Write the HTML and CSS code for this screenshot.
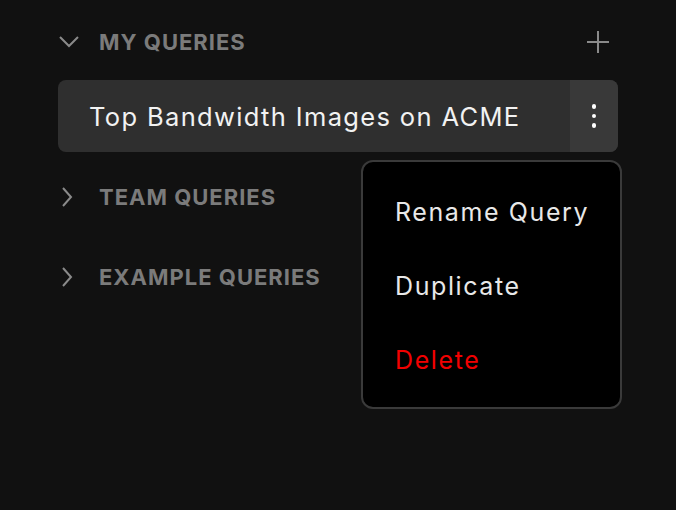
FILE: index.html
```html
<!DOCTYPE html>
<html>
<head>
<meta charset="utf-8">
<link rel="stylesheet" href="styles.css">
</head>
<body>
<div class="sidebar">
  <div class="section-header">
    <svg class="chev-down" width="20" height="12" viewBox="0 0 20 12"><path d="M1 1 L10 10 L19 1" fill="none" stroke="#8a8a8a" stroke-width="2"/></svg>
    <span class="section-title">MY QUERIES</span>
    <svg class="plus" width="22" height="22" viewBox="0 0 22 22"><path d="M11 0 V22 M0 11 H22" stroke="#8a8a8a" stroke-width="2"/></svg>
  </div>
  <div class="query-row">
    <span class="query-name">Top Bandwidth Images on ACME</span>
    <div class="kebab">
      <span class="dot"></span><span class="dot"></span><span class="dot"></span>
    </div>
    <div class="menu">
      <div class="menu-item">Rename Query</div>
      <div class="menu-item">Duplicate</div>
      <div class="menu-item danger">Delete</div>
    </div>
  </div>
  <div class="section-header collapsed first">
    <svg class="chev-right" width="12" height="20" viewBox="0 0 12 20"><path d="M1 1 L9 10 L1 19" fill="none" stroke="#8a8a8a" stroke-width="2"/></svg>
    <span class="section-title">TEAM QUERIES</span>
  </div>
  <div class="section-header collapsed">
    <svg class="chev-right" width="12" height="20" viewBox="0 0 12 20"><path d="M1 1 L9 10 L1 19" fill="none" stroke="#8a8a8a" stroke-width="2"/></svg>
    <span class="section-title">EXAMPLE QUERIES</span>
  </div>
</div>
</body>
</html>
```

FILE: styles.css
```css
html, body {
  margin: 0;
  padding: 0;
  background: #111111;
  font-family: Inter, "Noto Sans", sans-serif;
  height: 100%;
}

.sidebar {
  width: 560px;
  padding: 22px 0 0 58px;
  display: flex;
  flex-direction: column;
}

.section-header {
  height: 40px;
  display: flex;
  align-items: center;
}

.section-header.first {
  margin-top: 25px;
}

.section-header.collapsed + .section-header.collapsed {
  margin-top: 40px;
}

.chev-down {
  margin-left: 1px;
  margin-right: 20px;
}

.chev-right {
  margin-left: 4px;
  margin-right: 25px;
}

.section-title {
  color: #7b7b7b;
  font-weight: 700;
  font-size: 22px;
  letter-spacing: 1px;
}

.plus {
  margin-left: auto;
  margin-right: 9px;
}

.query-row {
  position: relative;
  margin-top: 18px;
  height: 72px;
  background: #2f2f2f;
  border-radius: 8px;
  display: flex;
  align-items: center;
}

.query-name {
  padding-left: 31px;
  color: #f2f2f2;
  font-size: 25.5px;
  letter-spacing: 1.35px;
  flex: 1;
}

.kebab {
  width: 48px;
  align-self: stretch;
  background: #393939;
  border-radius: 0 8px 8px 0;
  display: flex;
  flex-direction: column;
  align-items: center;
  justify-content: center;
  gap: 5px;
}

.dot {
  width: 4.5px;
  height: 4.5px;
  border-radius: 50%;
  background: #ffffff;
}

.menu {
  position: absolute;
  top: 80px;
  right: -4px;
  padding-top: 13px;
  background: #000000;
  border: 2px solid #3a3a3a;
  border-radius: 12px;
  box-sizing: border-box;
  width: 261px;
  height: 249px;
}

.menu-item {
  height: 74px;
  display: flex;
  align-items: center;
  padding-left: 32px;
  color: #e8e8e8;
  font-size: 25px;
  letter-spacing: 1.6px;
}

.menu-item.danger {
  color: #f20000;
}
```
